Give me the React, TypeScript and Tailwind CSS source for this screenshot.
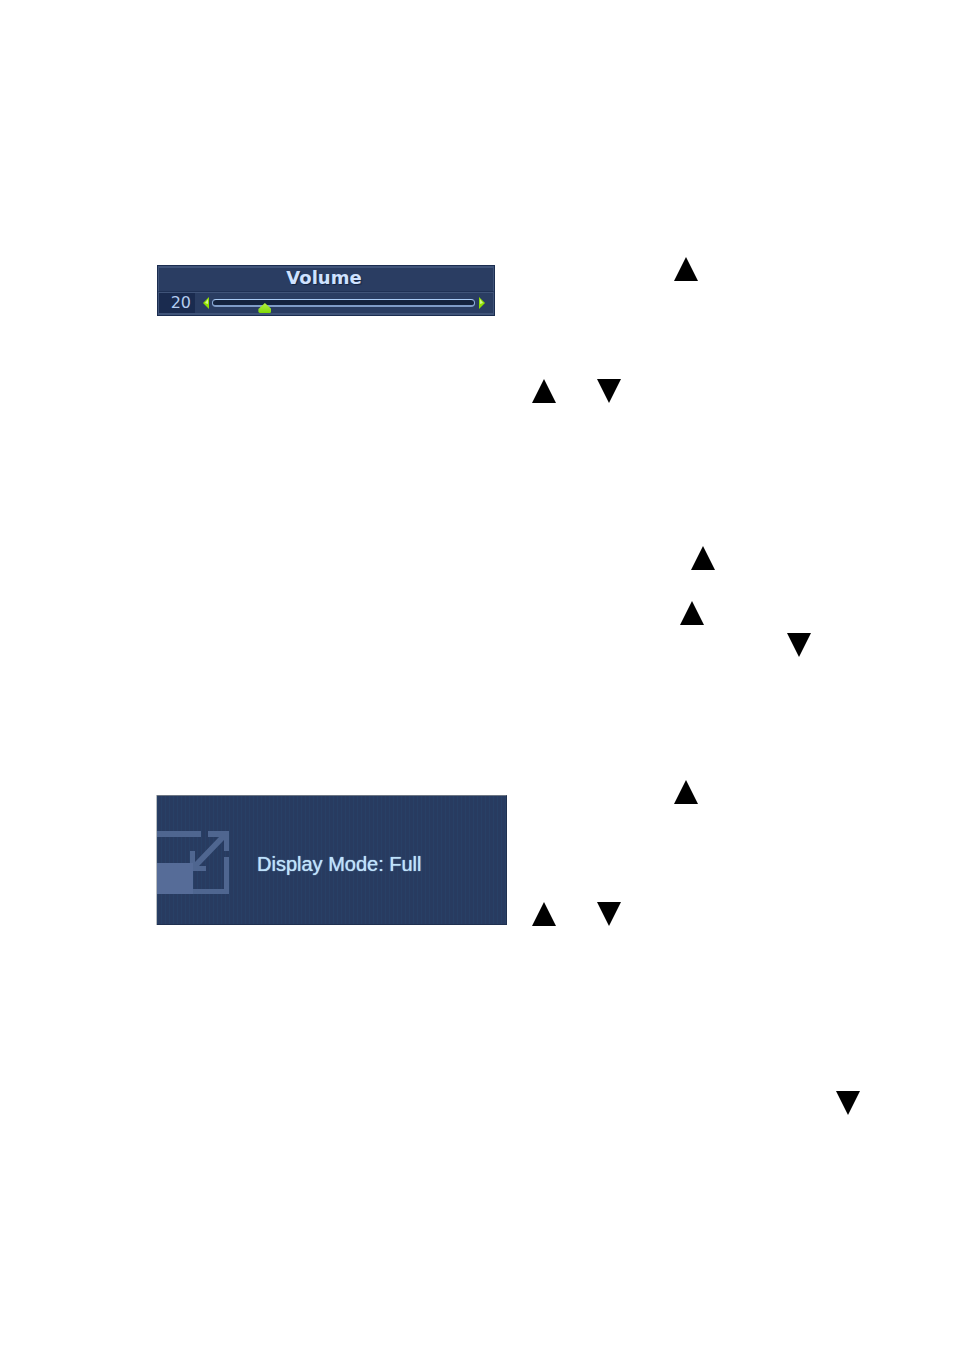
import React, { useState } from 'react';

type Direction = 'up' | 'down';

function KeyIcon({ direction }: { direction: Direction }) {
  return (
    <svg viewBox="0 0 24 24" className="w-6 h-6 shrink-0 fill-black" role="img" aria-label={direction}>
      <path d={direction === 'up' ? 'M12 0 24 24H0z' : 'M0 0H24L12 24z'} />
    </svg>
  );
}

function VolumePanel() {
  const [volume, setVolume] = useState(20);

  return (
    <div className="w-full max-w-[338px] border border-[#1b2d50] bg-[#2a3d62] font-['DejaVu_Sans',sans-serif] text-[#cfe2ff]">
      <div className="border border-t-2 border-[#405479] border-b-[#1f3155]">
        <label
          htmlFor="volume"
          className="block h-[23px] pr-1 text-center text-lg leading-5 font-bold [text-shadow:1px_1px_1px_#152443]"
        >
          Volume
        </label>
      </div>
      <div className="flex items-center h-[23px] border border-b-2 border-[#405479]">
        <output
          htmlFor="volume"
          className="w-9 h-full shrink-0 bg-[#1a2b4f] pr-1 text-right text-base leading-5 text-[#b4cdf0]"
        >
          {volume}
        </output>
        <button
          type="button"
          aria-label="Decrease volume"
          className="ml-2 shrink-0"
          onClick={() => setVolume(Math.max(0, volume - 1))}
        >
          <svg viewBox="0 0 7 12" className="w-[7px] h-3">
            <path d="M6 0V12L0 6z" fill="#8ee000" />
            <path d="M5 2V7L2 6z" fill="#d2f58a" />
          </svg>
        </button>
        <div className="relative ml-0.5 mr-[3px] h-2 grow">
          <div className="h-2 rounded-full border border-t-[#a9cbf5] border-x-[#8fb0dc] border-b-2 border-b-[#7f9cc8] bg-[#14233f]" />
          <input
            id="volume"
            type="range"
            min={0}
            max={100}
            value={volume}
            onChange={(e) => setVolume(Number(e.target.value))}
            className="absolute -left-1.5 top-1 h-[10px] w-[calc(100%+12px)] appearance-none bg-transparent [&::-webkit-slider-thumb]:h-[10px] [&::-webkit-slider-thumb]:w-[13px] [&::-webkit-slider-thumb]:appearance-none [&::-webkit-slider-thumb]:bg-linear-to-b [&::-webkit-slider-thumb]:from-[#b4f03c] [&::-webkit-slider-thumb]:to-[#7fd800] [&::-webkit-slider-thumb]:[clip-path:polygon(50%_0,100%_60%,100%_90%,90%_100%,10%_100%,0_90%,0_60%)]"
          />
        </div>
        <button
          type="button"
          aria-label="Increase volume"
          className="mr-2 shrink-0"
          onClick={() => setVolume(Math.min(100, volume + 1))}
        >
          <svg viewBox="0 0 7 12" className="w-[7px] h-3">
            <path d="M1 0V12L7 6z" fill="#8ee000" />
            <path d="M2 2V7L5 6z" fill="#d2f58a" />
          </svg>
        </button>
      </div>
    </div>
  );
}

function DisplayModePanel() {
  return (
    <div className="flex items-center w-full max-w-[350px] h-[130px] border-y border-r border-t-[#6d7683] border-b-[#1f3050] border-r-[#1f3050] bg-[#283b60] bg-[repeating-linear-gradient(90deg,#284066_0_1px,transparent_1px_4px)] shadow-[-1px_0_0_#b9bdc0]">
      <svg viewBox="0 0 72 63" className="w-[72px] h-[63px] mt-[5px] shrink-0 fill-[#4f6690]">
        <path d="M0 0H44V6H0z" />
        <path d="M51 0H72V20H67V9L42 35H49V40H33V20H38V31L62 6H51z" />
        <path d="M67 26H72V63H36V58H67z" />
        <path d="M0 32H36V63H0z" fill="#566c98" />
      </svg>
      <p className="ml-7 mt-2 text-xl leading-6 whitespace-nowrap font-['Liberation_Sans',Arial,sans-serif] text-[#bfe2fc] [text-shadow:0_0_1px_#bfe2fc]">
        Display Mode: Full
      </p>
    </div>
  );
}

export default function App() {
  return (
    <main className="bg-white pl-[157px] pt-[257px] pb-[235px]">
      <section className="grid grid-cols-[375px_1fr] items-start">
        <div className="pt-2">
          <VolumePanel />
        </div>
        <div className="flex flex-col">
          <div className="flex pl-[142px]">
            <KeyIcon direction="up" />
          </div>
          <div className="flex gap-[41px] mt-[98px]">
            <KeyIcon direction="up" />
            <KeyIcon direction="down" />
          </div>
          <div className="flex mt-[143px] pl-[159px]">
            <KeyIcon direction="up" />
          </div>
          <div className="flex mt-[31px] pl-[148px]">
            <KeyIcon direction="up" />
          </div>
          <div className="flex mt-2 pl-[255px]">
            <KeyIcon direction="down" />
          </div>
        </div>
      </section>

      <section className="grid grid-cols-[375px_1fr] items-start mt-[123px]">
        <div className="pt-[15px]">
          <DisplayModePanel />
        </div>
        <div className="flex flex-col">
          <div className="flex pl-[142px]">
            <KeyIcon direction="up" />
          </div>
          <div className="flex gap-[41px] mt-[98px]">
            <KeyIcon direction="up" />
            <KeyIcon direction="down" />
          </div>
          <div className="flex mt-[165px] pl-[304px]">
            <KeyIcon direction="down" />
          </div>
        </div>
      </section>
    </main>
  );
}
